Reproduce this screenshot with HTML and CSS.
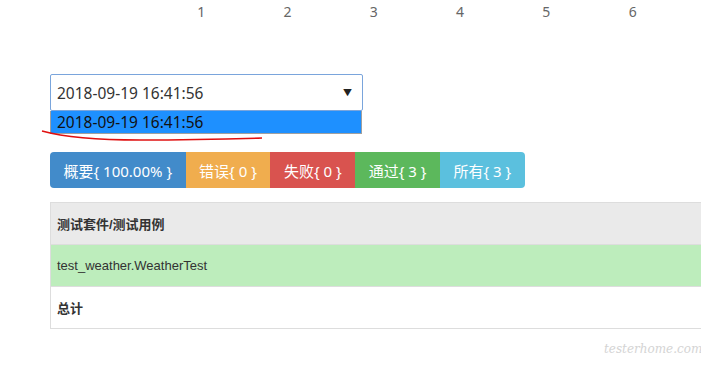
FILE: index.html
```html
<!DOCTYPE html>
<html lang="en">
<head>
  <meta charset="UTF-8">
  <title>测试报告</title>
  <link rel="stylesheet" href="styles.css">
</head>
<body>
  <div class="ruler">
    <span>1</span><span>2</span><span>3</span><span>4</span><span>5</span><span>6</span>
  </div>

  <div class="content">
    <div class="picker">
      <div class="select">
        <span>2018-09-19 16:41:56</span>
        <span class="arrow">&#9660;</span>
      </div>
      <div class="option">2018-09-19 16:41:56</div>
    </div>

    <div class="btn-group">
      <button class="btn btn-primary">概要{ 100.00% }</button>
      <button class="btn btn-warning">错误{ 0 }</button>
      <button class="btn btn-danger">失败{ 0 }</button>
      <button class="btn btn-success">通过{ 3 }</button>
      <button class="btn btn-info">所有{ 3 }</button>
    </div>

    <div class="table-wrap">
      <table class="result">
        <tr class="head"><td>测试套件/测试用例</td></tr>
        <tr class="pass"><td>test_weather.WeatherTest</td></tr>
        <tr class="total"><td>总计</td></tr>
      </table>
    </div>
  </div>

  <svg class="scribble" width="240" height="20" viewBox="0 0 240 20">
    <path d="M2 7 C 20 12, 50 16, 100 16 S 190 15, 222 14" fill="none" stroke="#e01010" stroke-width="1.5"/>
  </svg>

  <div class="watermark">testerhome.com</div>
</body>
</html>
```

FILE: styles.css
```css
body {
  margin: 0;
  font-family: "Noto Sans", "Noto Sans CJK SC", sans-serif;
  font-size: 14px;
  color: #333;
  background: #fff;
  overflow: hidden;
}
.ruler {
  display: flex;
  height: 24px;
  padding-left: 158px;
  color: #666;
  line-height: 24px;
}
.ruler span {
  width: 86.3px;
  text-align: center;
}
.content {
  padding-left: 50px;
  padding-top: 50px;
}
.picker {
  width: 313px;
}
.select {
  display: flex;
  justify-content: space-between;
  align-items: center;
  height: 35px;
  padding: 0 10px 0 6px;
  border: 1px solid #7aa5dc;
  border-radius: 2px;
  color: #333;
  font-size: 15.5px;
}
.arrow {
  font-size: 9px;
  color: #222;
}
.option {
  height: 22px;
  line-height: 22px;
  padding-left: 6px;
  margin-right: 1px;
  background: #1e90ff;
  border: 1px solid #a0a0a0;
  border-top: none;
  color: #111;
  font-size: 15.5px;
}
.btn-group {
  display: flex;
  margin-top: 18px;
}
.btn {
  height: 36px;
  padding: 0 13.5px;
  border: none;
  font-family: inherit;
  font-size: 15px;
  color: #fff;
}
.btn:first-child {
  border-radius: 4px 0 0 4px;
}
.btn:last-child {
  border-radius: 0 4px 4px 0;
}
.btn-primary { background: #428bca; }
.btn-warning { background: #f0ad4e; }
.btn-danger { background: #d9534f; }
.btn-success { background: #5cb85c; }
.btn-info { background: #5bc0de; }
.table-wrap {
  margin-top: 14px;
}
.result {
  width: 680px;
  border-collapse: collapse;
  border: 1px solid #ddd;
  font-family: "Liberation Sans", "Noto Sans CJK SC", sans-serif;
  font-size: 13px;
}
.result td {
  height: 41px;
  padding: 0 6px;
  border-top: 1px solid #ddd;
}
.head td {
  background: #eaeaea;
  font-weight: bold;
}
.pass td {
  background: #bdedbc;
}
.total td {
  font-weight: bold;
}
.scribble {
  position: absolute;
  left: 40px;
  top: 124px;
}
.watermark {
  position: absolute;
  left: 604px;
  top: 342px;
  color: #d4d4d4;
  font-family: "DejaVu Serif", serif;
  font-style: italic;
  font-size: 12px;
}
```
